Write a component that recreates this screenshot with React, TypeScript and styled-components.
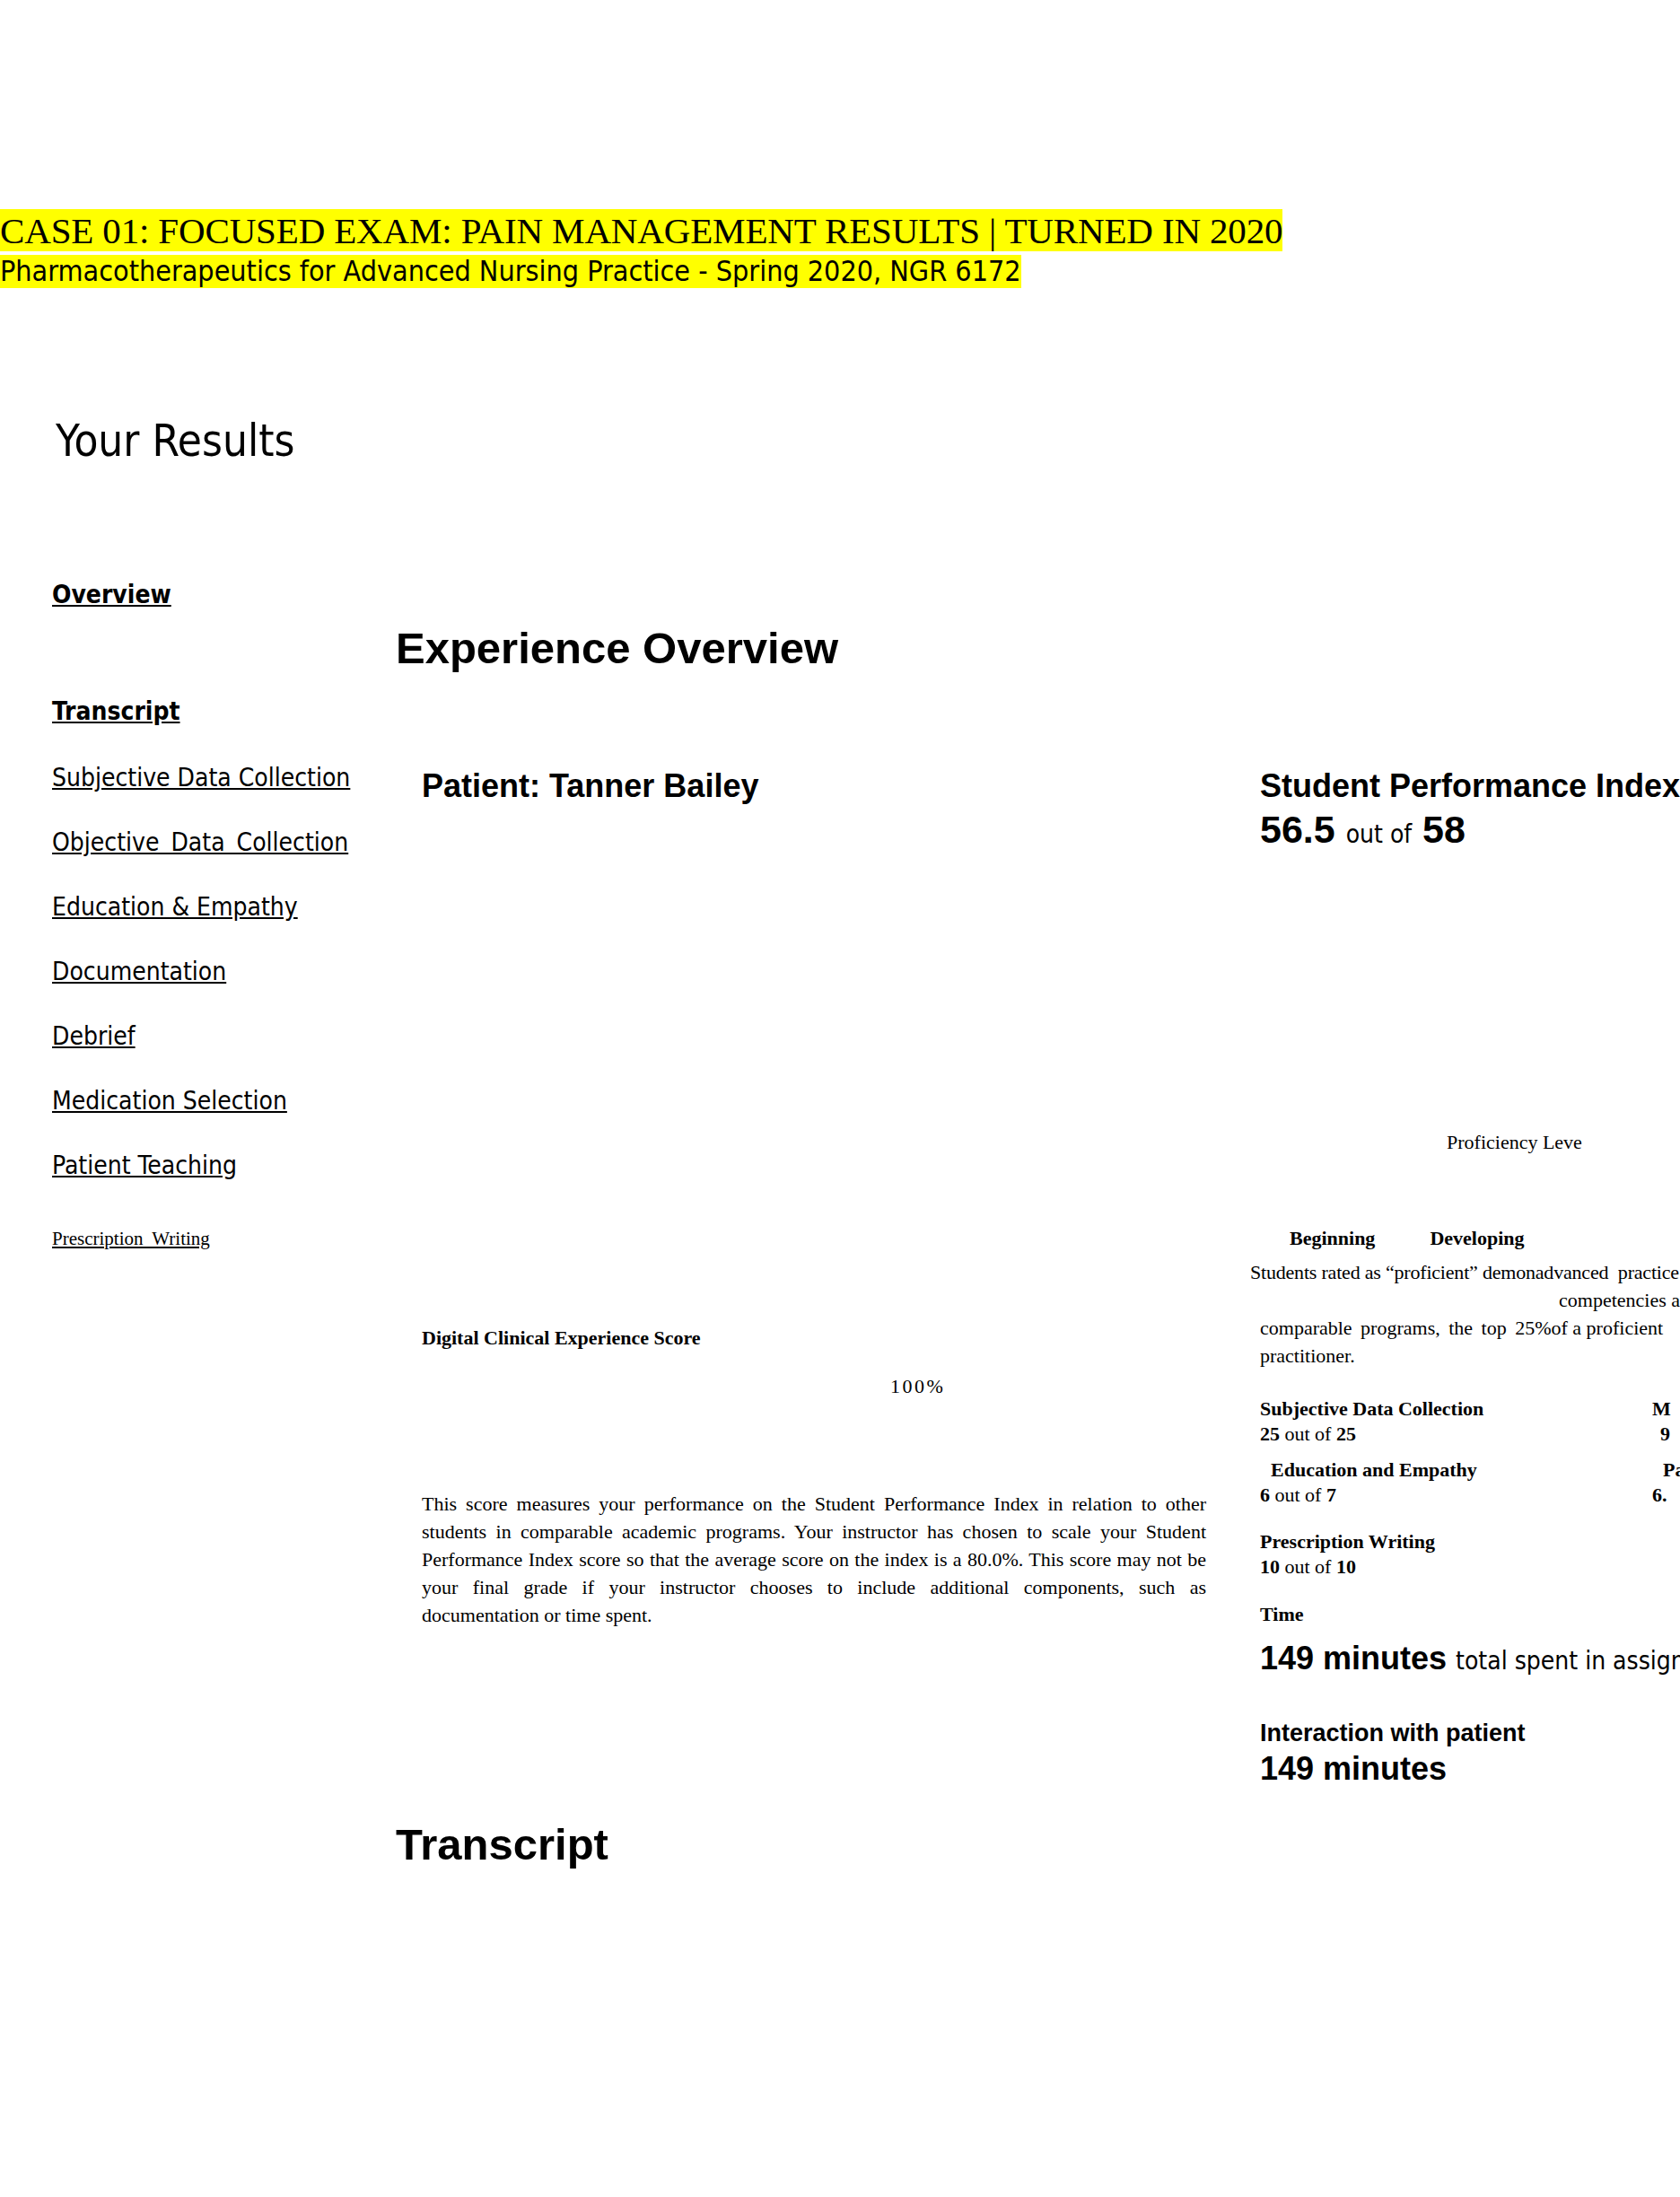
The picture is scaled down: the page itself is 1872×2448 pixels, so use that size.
import React from "react";
import styled, { createGlobalStyle } from "styled-components";

const SANS = `"Liberation Sans", Arial, sans-serif`;
const SERIF = `"Liberation Serif", "Times New Roman", serif`;
const HUMAN = `"DejaVu Sans Condensed", "DejaVu Sans", sans-serif`;

const GlobalStyle = createGlobalStyle`
  html, body {
    margin: 0;
    padding: 0;
    background: #ffffff;
    overflow-x: hidden;
  }
  body {
    color: #000000;
    font-family: ${SERIF};
  }
  * { box-sizing: border-box; }
`;

const Page = styled.div`
  width: 1872px;
  padding-top: 233px;
  padding-bottom: 120px;
  overflow: hidden;
`;

const CaseTitle = styled.div`
  width: fit-content;
  background: #ffff00;
  font-family: ${SERIF};
  font-size: 41px;
  letter-spacing: -0.15px;
  line-height: 45px;
  padding-top: 2px;
  white-space: nowrap;
`;

const CourseTitle = styled.div`
  width: fit-content;
  background: #ffff00;
  margin-top: 4px;
  font-family: ${HUMAN};
  font-size: 32px;
  line-height: 37px;
  white-space: nowrap;
`;

const ResultsTitle = styled.div`
  margin-top: 143px;
  padding-left: 62px;
  font-family: ${HUMAN};
  font-size: 49px;
  line-height: 56px;
`;

const Body = styled.div`
  display: flex;
  margin-top: 128px;
`;

const Nav = styled.nav`
  flex-shrink: 0;
  width: 441px;
  padding-left: 58px;
  display: flex;
  flex-direction: column;
  align-items: flex-start;
`;

const NavLink = styled.a<{ $bold?: boolean; $mt: number; $serif?: boolean; $ws?: number }>`
  display: block;
  margin-top: ${(p) => p.$mt}px;
  color: #000000;
  text-decoration: underline;
  white-space: nowrap;
  font-family: ${(p) => (p.$serif ? SERIF : HUMAN)};
  font-size: ${(p) => (p.$serif ? 21 : 28)}px;
  line-height: ${(p) => (p.$serif ? 24 : 30)}px;
  font-weight: ${(p) => (p.$bold ? 700 : 400)};
  word-spacing: ${(p) => p.$ws ?? 0}px;
`;

const Main = styled.main`
  flex: 1;
  min-width: 0;
`;

const SectionTitle = styled.h1<{ $mt: number }>`
  margin: ${(p) => p.$mt}px 0 0 0;
  font-family: ${SANS};
  font-weight: 700;
  font-size: 49px;
  line-height: 56px;
  white-space: nowrap;
`;

const Columns = styled.div`
  display: grid;
  grid-template-columns: 874px 468px;
  column-gap: 60px;
  padding-left: 29px;
  margin-top: 105px;
  align-items: start;
`;

const Column = styled.section`
  display: flex;
  flex-direction: column;
  align-items: stretch;
`;

const CardTitle = styled.h2`
  margin: 0;
  font-family: ${SANS};
  font-weight: 700;
  font-size: 36px;
  line-height: 42px;
  white-space: nowrap;
`;

const ScoreTitle = styled.div`
  margin-top: 581px;
  font-family: ${SERIF};
  font-weight: 700;
  font-size: 22px;
  line-height: 26px;
`;

const Percent = styled.div`
  margin-top: 29px;
  padding-left: 522px;
  font-family: ${SERIF};
  font-size: 22px;
  line-height: 24px;
  letter-spacing: 2.5px;
`;

const Paragraph = styled.div`
  margin-top: 103px;
  font-family: ${SERIF};
  font-size: 22px;
  line-height: 31px;
`;

const ParaLine = styled.div<{ $last?: boolean }>`
  text-align: ${(p) => (p.$last ? "left" : "justify")};
  text-align-last: ${(p) => (p.$last ? "left" : "justify")};
`;

const IndexScore = styled.div`
  margin-top: 3px;
  font-family: ${SANS};
  font-weight: 700;
  font-size: 43px;
  line-height: 48px;
  white-space: nowrap;
`;

const Soft = styled.span`
  font-family: ${HUMAN};
  font-weight: 400;
  font-size: 28px;
  line-height: 1;
`;

const Proficiency = styled.div`
  margin-top: 312px;
  padding-left: 208px;
  font-family: ${SERIF};
  font-size: 22px;
  line-height: 26px;
  white-space: nowrap;
`;

const Levels = styled.div`
  margin-top: 81px;
  padding-left: 33px;
  display: flex;
  gap: 61px;
  font-family: ${SERIF};
  font-weight: 700;
  font-size: 22px;
  line-height: 26px;
`;

const Description = styled.div`
  margin-top: 9px;
  font-family: ${SERIF};
  font-size: 22px;
  line-height: 31px;
  white-space: nowrap;
`;

const DescLine = styled.div<{ $indent: number; $tight?: boolean }>`
  margin-left: ${(p) => p.$indent}px;
  letter-spacing: ${(p) => (p.$tight ? -0.2 : 0)}px;
`;

const Spread = styled.span`
  word-spacing: 4px;
`;

const ScoreGrid = styled.div`
  margin-top: 30px;
  display: grid;
  grid-template-columns: 437px 1fr;
  row-gap: 12px;
  font-family: ${SERIF};
  font-size: 22px;
  line-height: 28px;
  white-space: nowrap;
`;

const ScoreCell = styled.div<{ $mt?: number }>`
  margin-top: ${(p) => p.$mt ?? 0}px;
`;

const CellLabel = styled.div<{ $indent?: number }>`
  padding-left: ${(p) => p.$indent ?? 0}px;
  font-weight: 700;
`;

const CellValue = styled.div<{ $indent?: number }>`
  padding-left: ${(p) => p.$indent ?? 0}px;
`;

const TimeLabel = styled.div`
  margin-top: 25px;
  font-family: ${SERIF};
  font-weight: 700;
  font-size: 22px;
  line-height: 28px;
`;

const BigStat = styled.div<{ $mt: number }>`
  margin-top: ${(p) => p.$mt}px;
  font-family: ${SANS};
  font-weight: 700;
  font-size: 36px;
  line-height: 42px;
  white-space: nowrap;
`;

const StatLabel = styled.div`
  margin-top: 46px;
  font-family: ${SANS};
  font-weight: 700;
  font-size: 27px;
  line-height: 32px;
  white-space: nowrap;
`;

const navItems = [
  { label: "Subjective Data Collection" },
  { label: "Objective Data Collection", ws: 5 },
  { label: "Education & Empathy" },
  { label: "Documentation" },
  { label: "Debrief" },
  { label: "Medication Selection" },
  { label: "Patient Teaching" },
];

const paragraphLines = [
  "This score measures your performance on the Student Performance Index in relation to other",
  "students in comparable academic programs. Your instructor has chosen to scale your Student",
  "Performance Index score so that the average score on the index is a 80.0%. This score may not be",
  "your final grade if your instructor chooses to include additional components, such as",
  "documentation or time spent.",
];

export default function App() {
  return (
    <>
      <GlobalStyle />
      <Page>
        <CaseTitle>CASE 01: FOCUSED EXAM: PAIN MANAGEMENT RESULTS | TURNED IN 2020</CaseTitle>
        <CourseTitle>Pharmacotherapeutics for Advanced Nursing Practice - Spring 2020, NGR 6172</CourseTitle>
        <ResultsTitle>Your Results</ResultsTitle>

        <Body>
          <Nav>
            <NavLink href="#" $bold $mt={0}>Overview</NavLink>
            <NavLink href="#" $bold $mt={100}>Transcript</NavLink>
            {navItems.map((item, i) => (
              <NavLink key={item.label} href="#" $mt={i === 0 ? 44 : 42} $ws={item.ws}>
                {item.label}
              </NavLink>
            ))}
            <NavLink href="#" $serif $mt={54} $ws={5}>Prescription Writing</NavLink>
          </Nav>

          <Main>
            <SectionTitle $mt={46}>Experience Overview</SectionTitle>
            <Columns>
              <Column>
                <CardTitle>Patient: Tanner Bailey</CardTitle>
                <ScoreTitle>Digital Clinical Experience Score</ScoreTitle>
                <Percent>100%</Percent>
                <Paragraph>
                  {paragraphLines.map((line, i) => (
                    <ParaLine key={i} $last={i === paragraphLines.length - 1}>
                      {line}
                    </ParaLine>
                  ))}
                </Paragraph>
              </Column>

              <Column>
                <CardTitle>Student Performance Index</CardTitle>
                <IndexScore>
                  56.5 <Soft>out of</Soft> 58
                </IndexScore>
                <Proficiency>Proficiency Leve</Proficiency>
                <Levels>
                  <span>Beginning</span>
                  <span>Developing</span>
                </Levels>
                <Description>
                  <DescLine $indent={-11} $tight>
                    Students rated as “proficient” demonadvanced&nbsp; practice
                  </DescLine>
                  <DescLine $indent={333}>competencies and</DescLine>
                  <DescLine $indent={0}>
                    <Spread>comparable programs, the top </Spread>25%of a proficient
                  </DescLine>
                  <DescLine $indent={0}>practitioner.</DescLine>
                </Description>

                <ScoreGrid>
                  <ScoreCell>
                    <CellLabel>Subjective Data Collection</CellLabel>
                    <CellValue>
                      <b>25</b> out of <b>25</b>
                    </CellValue>
                  </ScoreCell>
                  <ScoreCell>
                    <CellLabel>M</CellLabel>
                    <CellValue $indent={9}>
                      <b>9</b>
                    </CellValue>
                  </ScoreCell>
                  <ScoreCell>
                    <CellLabel $indent={12}>Education and Empathy</CellLabel>
                    <CellValue>
                      <b>6</b> out of <b>7</b>
                    </CellValue>
                  </ScoreCell>
                  <ScoreCell>
                    <CellLabel $indent={12}>Pa</CellLabel>
                    <CellValue>
                      <b>6.</b>
                    </CellValue>
                  </ScoreCell>
                  <ScoreCell $mt={12}>
                    <CellLabel>Prescription Writing</CellLabel>
                    <CellValue>
                      <b>10</b> out of <b>10</b>
                    </CellValue>
                  </ScoreCell>
                </ScoreGrid>

                <TimeLabel>Time</TimeLabel>
                <BigStat $mt={14}>
                  149 minutes <Soft>total spent in assignment</Soft>
                </BigStat>
                <StatLabel>Interaction with patient</StatLabel>
                <BigStat $mt={3}>149 minutes</BigStat>
              </Column>
            </Columns>
            <SectionTitle $mt={35}>Transcript</SectionTitle>
          </Main>
        </Body>
      </Page>
    </>
  );
}
